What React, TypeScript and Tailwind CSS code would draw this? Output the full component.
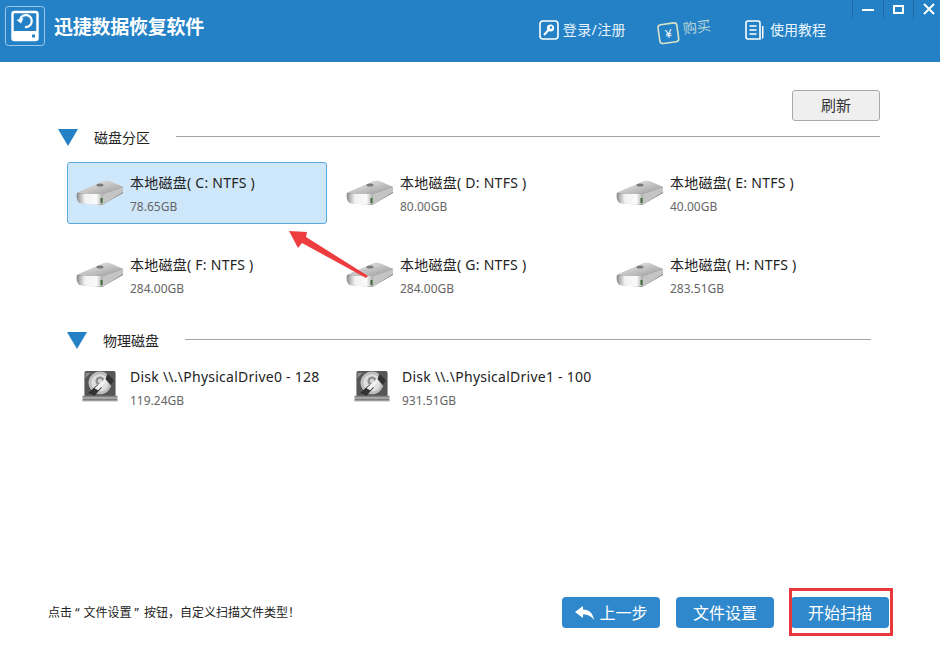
import React from "react";

const font = { fontFamily: '"Noto Sans", "Noto Sans CJK SC", sans-serif' };

function VolumeIcon() {
  return (
    <svg width="48" height="28" viewBox="0 0 48 28" className="shrink-0">
      <defs>
        <linearGradient id="volTop" x1="0" y1="0" x2="1" y2="1">
          <stop offset="0" stopColor="#f0f0f0" />
          <stop offset="0.6" stopColor="#bcbcbc" />
          <stop offset="1" stopColor="#969696" />
        </linearGradient>
        <linearGradient id="volFront" x1="0" y1="0" x2="1" y2="0">
          <stop offset="0" stopColor="#8f8f8f" />
          <stop offset="0.3" stopColor="#f2f2f2" />
          <stop offset="0.75" stopColor="#fafafa" />
          <stop offset="1" stopColor="#a8a8a8" />
        </linearGradient>
      </defs>
      <path d="M1 14 L29 2 L47 8 L47 14 L26 26 L4 24 C1 22 0 18 1 14 Z" fill="#777" />
      <path d="M1.5 13.5 L26 3 C30 1 33 2 36 3 L47 8 L27 15 L6 14.5 Z" fill="url(#volTop)" />
      <path d="M1.5 14 L6 14.5 L27 15 L27 25.5 C16 26 9 25 4 24 C1 22 0.5 18 1.5 14 Z" fill="url(#volFront)" />
      <path d="M27 15 L47 8 L47 13 L28 25 L27 25.5 Z" fill="#c4c4c4" />
      <ellipse cx="24" cy="6" rx="3.5" ry="1.6" fill="#7a7a7a" />
      <rect x="24.5" y="19" width="2" height="5" fill="#3f6b3a" />
    </svg>
  );
}

function DiskIcon() {
  return (
    <svg width="38" height="33" viewBox="0 0 40 36" className="shrink-0 ml-[1px]">
      <rect x="3" y="1" width="34" height="28" rx="2" fill="#565656" />
      <rect x="1" y="28" width="38" height="6" fill="#7f7f7f" />
      <rect x="1" y="30" width="38" height="1" fill="#d2d2d2" />
      <rect x="1" y="33" width="38" height="1" fill="#a8a8a8" />
      <circle cx="20" cy="14" r="12.5" fill="#bdbdbd" />
      <circle cx="20" cy="14" r="9.5" fill="#dedede" />
      <circle cx="20" cy="12" r="5" fill="#8e8e8e" />
      <circle cx="20" cy="12" r="2.4" fill="#d4d4d4" />
      <path d="M7 25 L17 16 L22 19 L14 28 Z" fill="#333" />
      <path d="M14 20 L27 8 L29 10 L18 22 Z" fill="#f3f3f3" />
      <path d="M28 4 L35 11 L32 17 L26 10 Z" fill="#333" />
      <path d="M4 3 L10 3 L4 9 Z" fill="#8a8a8a" />
    </svg>
  );
}

function Section({ title, pad, children }: { title: string; pad: string; children: React.ReactNode }) {
  return (
    <div className={pad}>
      <div className="flex items-center h-[18px]">
        <div className="w-0 h-0 border-l-[10px] border-r-[10px] border-t-[17px] border-l-transparent border-r-transparent border-t-[#2481c6]" />
        <span className="ml-4 text-[14px] leading-[18px] text-[#222] mt-[1px]">{title}</span>
        <div className="ml-[26px] flex-1 h-px bg-[#a6a6a6] -mt-[1px]" />
      </div>
      {children}
    </div>
  );
}

function Volume({ name, size, selected }: { name: string; size: string; selected?: boolean }) {
  return (
    <div
      className={`w-[260px] h-[62px] rounded-[3px] flex items-center pl-[8px] border ${
        selected ? "bg-[#cfe7fa] border-[#5aa9da]" : "border-transparent"
      }`}
    >
      <VolumeIcon />
      <div className="ml-[6px] flex flex-col mt-[2px]">
        <span className="text-[14px] leading-[20px] tracking-[0.25px] text-[#222]">{name}</span>
        <span className="text-[12px] leading-[16px] mt-[6px] text-[#666]">{size}</span>
      </div>
    </div>
  );
}

function Disk({ name, size }: { name: string; size: string }) {
  return (
    <div className="flex items-center w-[272px]">
      <DiskIcon />
      <div className="ml-[11px] flex flex-col mt-[4px]">
        <span className="text-[14px] leading-[20px] tracking-[0.25px] text-[#222]">{name}</span>
        <span className="text-[12px] leading-[16px] mt-[6px] text-[#666]">{size}</span>
      </div>
    </div>
  );
}

function Button({ children, className = "" }: { children: React.ReactNode; className?: string }) {
  return (
    <div className={`w-[98px] h-[31px] rounded-[4px] bg-[#2e88cb] text-white text-[16px] flex items-center justify-center ${className}`}>
      {children}
    </div>
  );
}

export default function App() {
  return (
    <div className="relative w-[940px] h-[650px] bg-white flex flex-col overflow-hidden" style={font}>
      <header className="h-[62px] bg-[#2481c6] flex items-start shrink-0">
        <svg width="40" height="40" viewBox="0 0 40 40" className="ml-[5px] mt-[6px]">
          <rect x="0.5" y="0.5" width="39" height="39" rx="3" fill="none" stroke="#9cc9ea" />
          <rect x="7.5" y="6" width="25" height="28" rx="2" fill="none" stroke="#fff" strokeWidth="2.4" />
          <rect x="7" y="25" width="26" height="9" rx="1.5" fill="#fff" />
          <rect x="27" y="28.5" width="3" height="3" fill="#2481c6" />
          <path d="M15 13.5 A6 6 0 1 1 20 21" fill="none" stroke="#fff" strokeWidth="2.2" />
          <path d="M11.5 14 L18.5 12 L16 17.5 Z" fill="#fff" />
        </svg>
        <div className="ml-[9px] mt-[14px] text-[19px] leading-[26px] tracking-[-0.25px] font-bold text-white">迅捷数据恢复软件</div>
        <div className="ml-auto mt-[17px] flex items-center text-[14px] leading-[20px] text-[#eaf4fb]">
          <svg width="20" height="20" viewBox="0 0 20 20">
            <rect x="1" y="1" width="18" height="18" rx="3" fill="none" stroke="#fff" strokeWidth="1.6" />
            <circle cx="11.5" cy="8" r="3.6" fill="#fff" />
            <circle cx="12" cy="7.5" r="1.2" fill="#2481c6" />
            <path d="M9.5 10 L5 15" stroke="#fff" strokeWidth="2" />
          </svg>
          <span className="ml-[4px] tracking-[0.4px]">登录/注册</span>
          <div className="ml-[31px] flex items-center -rotate-[8deg] text-[#b9d6d9]">
            <svg width="22" height="22" viewBox="0 0 22 22" className="mt-[3px]">
              <rect x="1.5" y="1.5" width="19" height="19" rx="3" fill="none" stroke="#d8e3c9" strokeWidth="1.6" />
              <text x="11" y="15.5" textAnchor="middle" fontSize="12" fill="#fff" fontFamily="Liberation Sans">¥</text>
            </svg>
            <span className="ml-[4px] -mt-[1px]">购买</span>
          </div>
          <svg width="20" height="20" viewBox="0 0 20 20" className="ml-[34px]">
            <path d="M3 1 H13 A2 2 0 0 1 15 3 V19 H3 A2 2 0 0 1 1 17 V3 A2 2 0 0 1 3 1 Z" fill="none" stroke="#fff" strokeWidth="1.6" />
            <path d="M4.5 6 H11.5 M4.5 10 H11.5 M4.5 14 H11.5" stroke="#fff" strokeWidth="1.3" />
            <path d="M17 6 H18.5 V17 A2 2 0 0 1 17 19 Z" fill="#fff" />
          </svg>
          <span className="ml-[5px]">使用教程</span>
        </div>
        <div className="ml-[26px] flex h-[19px]">
          <div className="w-[31px] h-[19px] border-l border-[#1b6aa6] flex items-center justify-center">
            <div className="w-[12px] h-[2px] bg-white" />
          </div>
          <div className="w-[30px] h-[19px] border-l border-[#1b6aa6] flex items-center justify-center">
            <div className="w-[11px] h-[9px] border-2 border-white -mt-[1px]" />
          </div>
          <div className="w-[27px] h-[19px] border-l border-[#1b6aa6] flex items-center justify-center pl-[4px]">
            <svg width="12" height="12" viewBox="0 0 12 12" className="-mt-[1px]">
              <path d="M1 1 L11 11 M11 1 L1 11" stroke="#fff" strokeWidth="2" />
            </svg>
          </div>
        </div>
      </header>

      <main className="flex-1 flex flex-col">
        <div className="flex justify-end pr-[60px] pt-[28px]">
          <div className="w-[88px] h-[31px] rounded-[3px] border border-[#a9a9a9] bg-[#efefef] text-[15px] text-[#333] flex items-center justify-center">
            刷新
          </div>
        </div>
        <Section title="磁盘分区" pad="mt-[7px] pl-[58px] pr-[60px]">
          <div className="mt-[16px] ml-[9px] grid grid-cols-[260px_260px_260px] gap-x-[10px] gap-y-[20px]">
            <Volume name="本地磁盘( C: NTFS )" size="78.65GB" selected />
            <Volume name="本地磁盘( D: NTFS )" size="80.00GB" />
            <Volume name="本地磁盘( E: NTFS )" size="40.00GB" />
            <Volume name="本地磁盘( F: NTFS )" size="284.00GB" />
            <Volume name="本地磁盘( G: NTFS )" size="284.00GB" />
            <Volume name="本地磁盘( H: NTFS )" size="283.51GB" />
          </div>
        </Section>
        <Section title="物理磁盘" pad="mt-[25px] pl-[67px] pr-[69px]">
          <div className="mt-[14px] ml-[13px] flex">
            <Disk name="Disk \\.\PhysicalDrive0 - 128" size="119.24GB" />
            <Disk name="Disk \\.\PhysicalDrive1 - 100" size="931.51GB" />
          </div>
        </Section>
      </main>

      <footer className="h-[53px] shrink-0 flex items-start pl-[48px]">
        <span className="mt-[7px] text-[12px] leading-[18px] text-[#222]">
          点击 <span className="tracking-[4px]">“</span>文件设置<span className="pl-[3px] pr-[2px]">”</span> 按钮，自定义扫描文件类型！
        </span>
        <div className="ml-auto flex items-start mr-[51px]">
          <Button>
            <svg width="22" height="16" viewBox="0 0 22 16" className="mr-[3px]">
              <path d="M1 7 L9 1 V4.5 C15 4.5 19 8 20 15 C17 11 14 9.5 9 9.5 V13 Z" fill="#fff" />
            </svg>
            上一步
          </Button>
          <Button className="ml-[16px]">文件设置</Button>
          <Button className="ml-[17px]">开始扫描</Button>
        </div>
      </footer>

      <div className="absolute left-[789px] top-[588px] w-[104px] h-[48px] border-[3px] border-[#e8383b]" />
      <svg className="absolute left-[280px] top-[225px]" width="95" height="55" viewBox="0 0 95 55">
        <path d="M9 6 L27 7 L26 12 L88 51 L86 53 L22 18 L18 23 Z" fill="#ee3d3f" />
      </svg>
    </div>
  );
}
